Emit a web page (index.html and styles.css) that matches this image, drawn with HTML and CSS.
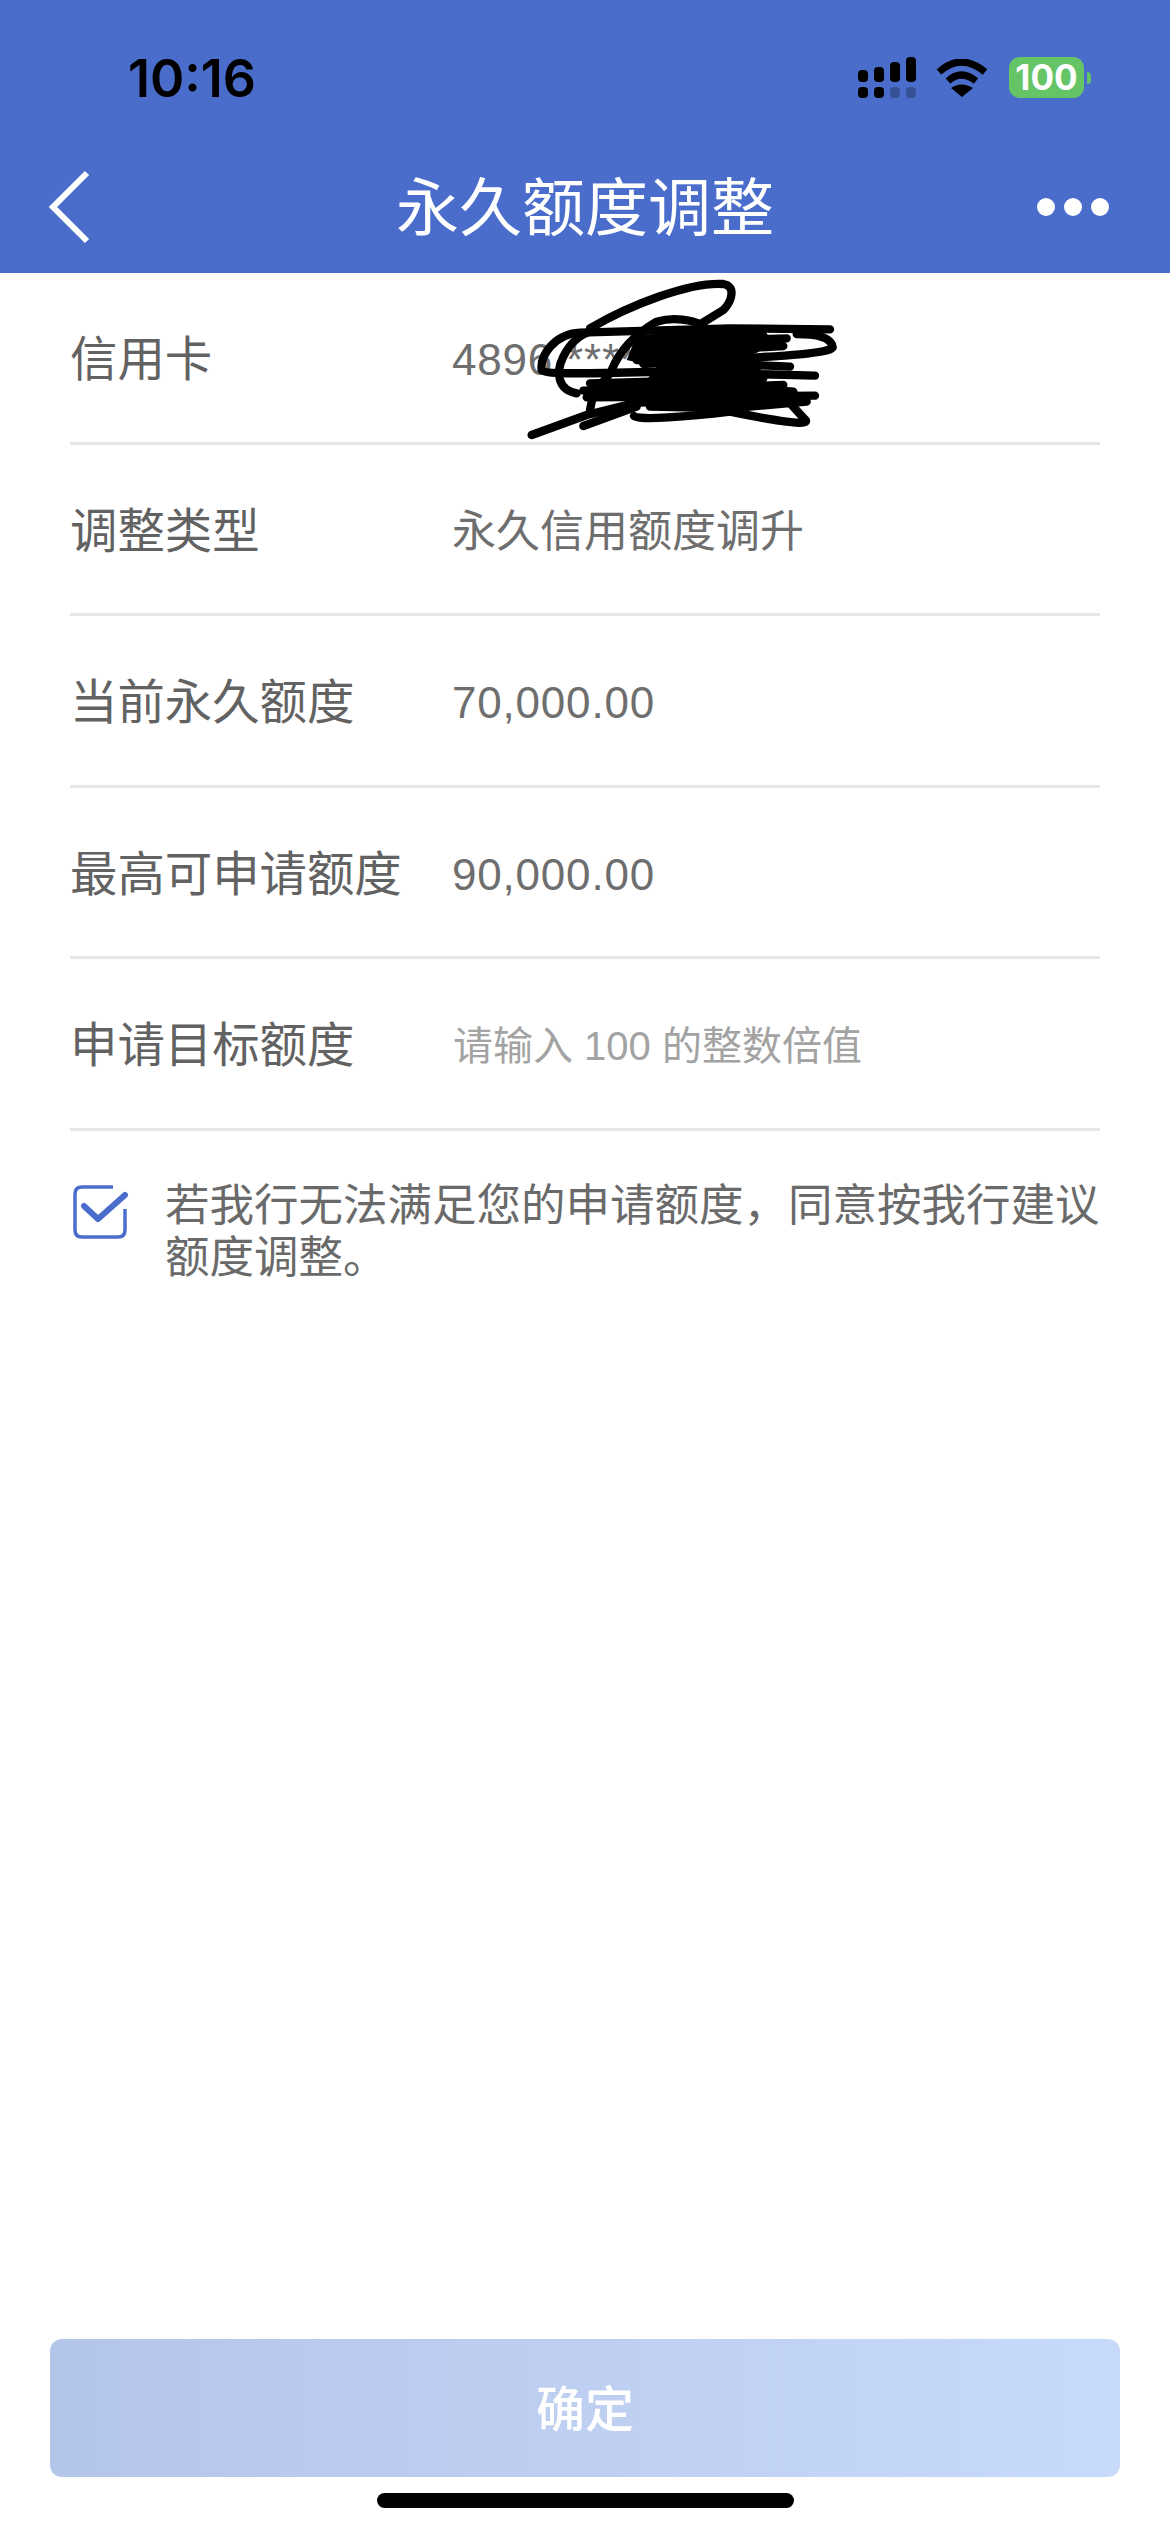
FILE: index.html
```html
<!DOCTYPE html>
<html lang="zh-CN">
<head>
    <meta charset="UTF-8">
    <title>永久额度调整</title>
    <link rel="stylesheet" href="styles.css">
</head>
<body>

    <header class="top">
        <div class="status">
            <span class="time">10:16</span>
            <div class="status-icons">
                <svg class="signal" width="58" height="41" viewBox="0 0 58 41">
                    <rect x="0" y="13" width="10" height="12" rx="4"/>
                    <rect x="16" y="10" width="10" height="15" rx="4"/>
                    <rect x="32" y="5" width="10" height="20" rx="4"/>
                    <rect x="48" y="0" width="10" height="25" rx="4"/>
                    <rect x="0" y="30" width="10" height="11" rx="4"/>
                    <rect x="16" y="30" width="10" height="11" rx="4"/>
                    <rect x="32" y="30" width="10" height="11" rx="4" opacity="0.25"/>
                    <rect x="48" y="30" width="10" height="11" rx="4" opacity="0.25"/>
                </svg>
                <svg class="wifi" width="52" height="38" viewBox="0 0 52 38">
                    <path d="M3 13 Q25 -7 49 13" fill="none" stroke="#000" stroke-width="7"/>
                    <path d="M12 22 Q25 10 40 22" fill="none" stroke="#000" stroke-width="7"/>
                    <path d="M15 29 Q25 22 37 29 L26 38 Z"/>
                </svg>
                <div class="battery">
                    <span class="battery-body">100</span>
                    <span class="battery-tip"></span>
                </div>
            </div>
        </div>
        <nav class="nav">
            <svg class="back" width="42" height="74" viewBox="0 0 42 74">
                <path d="M39 3 L5 37 L39 71" fill="none" stroke="#fff" stroke-width="6"/>
            </svg>
            <h1>永久额度调整</h1>
            <div class="more"><i></i><i></i><i></i></div>
        </nav>
    </header>

    <main class="form">
        <div class="row">
            <span class="label">信用卡</span>
            <span class="value number card">4896 **** ****
                <!-- ink over the card number -->
                <svg class="scribble" width="440" height="190" viewBox="0 0 1320 570">
                    <g fill="none" stroke="#000" stroke-width="25" stroke-linecap="round" stroke-linejoin="round">
                        <path d="M480 205 C600 135 780 65 880 72 C920 78 905 125 880 150 L815 190"/>
                        <path d="M1200 208 L900 205 L450 218 C370 222 330 290 335 330 C345 345 500 340 700 335 L1155 347"/>
                        <path d="M440 400 C385 390 375 340 400 290 C420 250 450 225 480 215"/>
                        <path d="M545 330 C570 270 620 220 680 185 C730 170 790 180 815 195"/>
                        <path d="M1100 222 C1170 222 1205 235 1208 262 C1195 285 1000 290 640 312"/>
                        <path d="M460 392 L1060 375"/>
                        <path d="M470 412 L1155 407"/>
                        <path d="M480 370 L1000 355"/>
                        <path d="M305 525 L470 465 L620 428 L1125 420"/>
                        <path d="M460 498 L620 440"/>
                        <path d="M612 468 C620 482 780 470 900 455 C1000 475 1130 500 1128 482 L1085 435"/>
                        <path d="M540 340 L490 400 L480 450"/>
                        <path d="M680 250 L1070 235"/>
                        <path d="M620 300 L1080 320"/>
                        <path d="M660 440 L900 445 L1130 425"/>
                        <path d="M960 385 L1090 395"/>
                        <path d="M990 262 L1060 258"/>
                    </g>
                    <path d="M620 225 L1000 205 L1030 250 L960 290 L1010 350 L990 425 L680 440 L620 400 L680 320 L590 300 Z"/>
                </svg>
            </span>
        </div>
        <div class="row">
            <span class="label">调整类型</span>
            <span class="value">永久信用额度调升</span>
        </div>
        <div class="row">
            <span class="label">当前永久额度</span>
            <span class="value number">70,000.00</span>
        </div>
        <div class="row">
            <span class="label">最高可申请额度</span>
            <span class="value number">90,000.00</span>
        </div>
        <div class="row">
            <span class="label">申请目标额度</span>
            <span class="value placeholder">请输入 100 的整数倍值</span>
        </div>

        <div class="agree">
            <svg class="check" width="56" height="54" viewBox="0 0 56 54">
                <path d="M40 2 H9 Q2 2 2 9 V45 Q2 52 9 52 H45 Q52 52 52 45 V24" fill="none" stroke="#4a6dcc" stroke-width="3.5"/>
                <path d="M11 21 L25 34 L52 10" fill="none" stroke="#4a6dcc" stroke-width="6" stroke-linecap="round" stroke-linejoin="round"/>
            </svg>
            <p>若我行无法满足您的申请额度，同意按我行建议额度调整。</p>
        </div>
    </main>

    <footer class="bottom">
        <button class="confirm">确定</button>
        <div class="home-bar"></div>
    </footer>

</body>
</html>
```

FILE: styles.css
```css
* {
    box-sizing: border-box;
}
body {
    margin: 0;
    width: 1170px;
    height: 2532px;
    display: flex;
    flex-direction: column;
    background-color: #ffffff;
    font-family: "Liberation Sans", "Noto Sans CJK SC", sans-serif;
    overflow: hidden;
}

/* header */
.top {
    height: 273px;
    background-color: #4a6dcc;
    flex-shrink: 0;
}
.status {
    height: 148px;
    padding: 58px 79px 0 128px;
    display: flex;
    justify-content: space-between;
    align-items: flex-start;
}
.time {
    font-family: Inter, sans-serif;
    font-size: 52px;
    font-weight: 600;
    line-height: 42px;
    color: #000;
}
.status-icons {
    display: flex;
    align-items: flex-start;
    margin-top: -1px;
}
.wifi {
    margin: 2px 21px 0 20px;
}
.battery {
    display: flex;
    align-items: center;
}
.battery-body {
    width: 75px;
    height: 41px;
    border-radius: 11px;
    background-color: #65c466;
    color: #fff;
    font-family: Inter, sans-serif;
    font-size: 35px;
    font-weight: 700;
    line-height: 41px;
    text-align: center;
}
.battery-tip {
    width: 4px;
    height: 12px;
    margin-left: 3px;
    border-radius: 0 4px 4px 0;
    background-color: #65c466;
}
.nav {
    height: 125px;
    padding: 0 61px 0 48px;
    display: flex;
    justify-content: space-between;
    align-items: center;
    position: relative;
}
.nav h1 {
    position: absolute;
    left: 0;
    right: 0;
    margin: 0 0 6px;
    text-align: center;
    font-size: 63px;
    font-weight: 400;
    line-height: 72px;
    color: #fff;
}
.back {
    margin-bottom: 7px;
}
.more {
    display: flex;
    gap: 9px;
    margin-bottom: 7px;
}
.more i {
    width: 18px;
    height: 18px;
    border-radius: 50%;
    background-color: #fff;
}

/* form */
.form {
    padding: 0 70px;
}
.row {
    height: 171.5px;
    padding-top: 6px;
    border-bottom: 3px solid #e6e6e6;
    display: flex;
    align-items: center;
}
.label {
    width: 382px;
    flex-shrink: 0;
    font-size: 47.4px;
    color: #626262;
    line-height: 56px;
}
.value {
    font-size: 44px;
    color: #6e6e6e;
    line-height: 56px;
}
.number {
    letter-spacing: 0.8px;
}
.placeholder {
    font-size: 40px;
    margin-left: 1px;
    color: #a3a3a3;
}
.card {
    position: relative;
}
.scribble {
    position: absolute;
    left: -22px;
    top: -72px;
}
.agree {
    display: flex;
    align-items: flex-start;
    margin-top: 52px;
    padding-left: 3px;
}
.check {
    flex-shrink: 0;
    margin: 2px 36px 0 0;
}
.agree p {
    margin: -3px 0 0;
    font-size: 44.5px;
    line-height: 52.5px;
    color: #6a6a6a;
}

/* bottom */
.bottom {
    margin-top: auto;
    padding: 0 50px 24px;
    display: flex;
    flex-direction: column;
    align-items: center;
}
.confirm {
    width: 1070px;
    height: 138px;
    padding: 0 0 6px;
    border: 0;
    border-radius: 12px;
    background: linear-gradient(90deg, #b4c5ea, #c8daf9);
    color: #fff;
    font-family: inherit;
    font-size: 49px;
    font-weight: 500;
}
.home-bar {
    width: 417px;
    height: 15px;
    margin-top: 16px;
    border-radius: 8px;
    background-color: #000;
}
```
